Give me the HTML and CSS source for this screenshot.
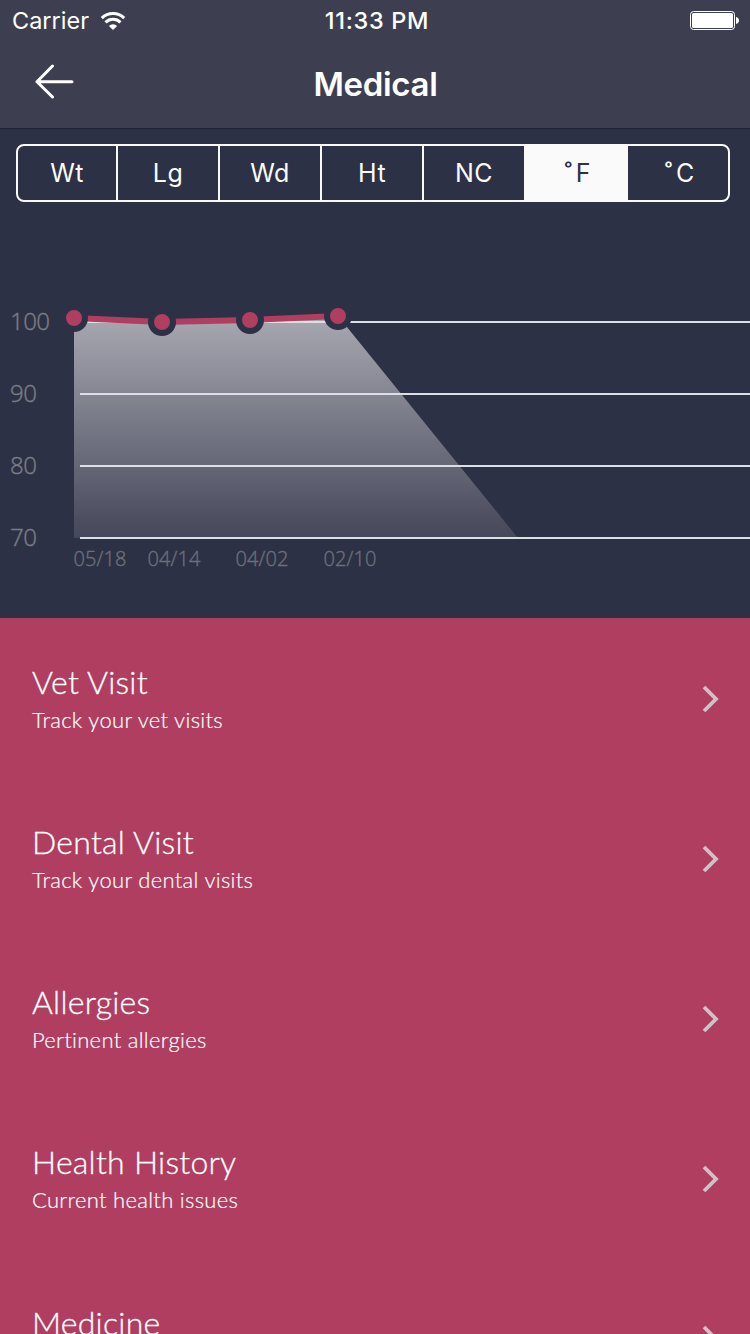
FILE: index.html
```
<!DOCTYPE html>
<html lang="en">
<head>
    <meta charset="UTF-8">
    <meta name="viewport" content="width=device-width, initial-scale=1.0">
    <title>Medical</title>
    <link rel="stylesheet" href="styles.css">
</head>
<body>
    <header class="header">
        <div class="status-bar">
            <div class="carrier">
                <span>Carrier</span>
                <svg width="26" height="20" viewBox="0 0 26 20" fill="none" stroke="white" stroke-width="3">
                    <path d="M1.8 7.1 A16 16 0 0 1 24.2 7.1"/>
                    <path d="M5.5 11.4 A10.8 10.8 0 0 1 20.5 11.4"/>
                    <path d="M13 19 L8.9 14.9 A5.8 5.8 0 0 1 17.1 14.9 Z" fill="white" stroke="none"/>
                </svg>
            </div>
            <span class="time">11:33 PM</span>
            <div class="battery">
                <svg width="50" height="20" viewBox="0 0 50 20">
                    <rect x="0.5" y="0.5" width="44" height="18" rx="3" fill="none" stroke="white"/>
                    <rect x="2" y="2" width="41" height="15" rx="1.5" fill="white"/>
                    <path d="M46 6 C50 6.5 50 12.5 46 13 Z" fill="white"/>
                </svg>
            </div>
        </div>
        <nav class="nav-bar">
            <a class="back">
                <svg width="40" height="36" viewBox="0 0 40 36" fill="none" stroke="white" stroke-width="3" stroke-linecap="round" stroke-linejoin="round">
                    <path d="M18.5 2 L3 17.7 L18.5 33 M3 17.7 H38"/>
                </svg>
            </a>
            <h1>Medical</h1>
        </nav>
    </header>

    <section class="stats">
        <div class="segments">
            <button>Wt</button>
            <button>Lg</button>
            <button>Wd</button>
            <button>Ht</button>
            <button>NC</button>
            <button class="active"><span class="degree">˚</span>F</button>
            <button><span class="degree">˚</span>C</button>
        </div>
        <svg class="chart" width="750" height="318" viewBox="0 300 750 318">
            <defs>
                <linearGradient id="areaFill" x1="0" y1="0" x2="0" y2="1">
                    <stop offset="0" stop-color="#a7a8b0"/>
                    <stop offset="1" stop-color="#45475a"/>
                </linearGradient>
            </defs>
            <path d="M74 318 L162 322 L250 320 L338 316 L518 538 H74 Z" fill="url(#areaFill)"/>
            <g class="grid">
                <path d="M80 322 H750"/>
                <path d="M80 394 H750"/>
                <path d="M80 466 H750"/>
                <path d="M80 538 H750"/>
            </g>
            <path class="line" d="M74 318 L162 322 L250 320 L338 316"/>
            <g class="dots">
                <circle cx="74" cy="318" r="11"/>
                <circle cx="162" cy="322" r="11"/>
                <circle cx="250" cy="320" r="11"/>
                <circle cx="338" cy="316" r="11"/>
            </g>
            <g class="y-labels">
                <text x="10" y="330" textLength="40">100</text>
                <text x="10" y="402" textLength="27">90</text>
                <text x="10" y="474" textLength="27">80</text>
                <text x="10" y="546" textLength="27">70</text>
            </g>
            <g class="x-labels">
                <text x="73.5" y="566" textLength="53">05/18</text>
                <text x="147.5" y="566" textLength="53">04/14</text>
                <text x="235.5" y="566" textLength="53">04/02</text>
                <text x="323.5" y="566" textLength="53">02/10</text>
            </g>
        </svg>
    </section>

    <main class="list">
        <div class="row">
            <div>
                <h2>Vet Visit</h2>
                <p>Track your vet visits</p>
            </div>
            <svg class="chevron" viewBox="0 0 18 28"><path d="M2 2 L14 14 L2 26"/></svg>
        </div>
        <div class="row">
            <div>
                <h2>Dental Visit</h2>
                <p>Track your dental visits</p>
            </div>
            <svg class="chevron" viewBox="0 0 18 28"><path d="M2 2 L14 14 L2 26"/></svg>
        </div>
        <div class="row">
            <div>
                <h2>Allergies</h2>
                <p>Pertinent allergies</p>
            </div>
            <svg class="chevron" viewBox="0 0 18 28"><path d="M2 2 L14 14 L2 26"/></svg>
        </div>
        <div class="row">
            <div>
                <h2>Health History</h2>
                <p>Current health issues</p>
            </div>
            <svg class="chevron" viewBox="0 0 18 28"><path d="M2 2 L14 14 L2 26"/></svg>
        </div>
        <div class="row last">
            <h2>Medicine</h2>
            <svg class="chevron" viewBox="0 0 18 28"><path d="M2 2 L14 14 L2 26"/></svg>
        </div>
    </main>
</body>
</html>
```
FILE: styles.css
```
* {
    box-sizing: border-box;
}
body {
    margin: 0;
    width: 750px;
    height: 1334px;
    overflow: hidden;
    font-family: Inter, sans-serif;
    background: #af3e61;
    color: white;
}
h1, h2, p {
    margin: 0;
}
.header {
    height: 129px;
    background: #3d3f50;
    border-bottom: 1px solid #202338;
}
.status-bar {
    display: grid;
    grid-template-columns: 1fr auto 1fr;
    align-items: center;
    height: 40px;
    padding: 1px 10px 0 12px;
}
.carrier {
    display: flex;
    align-items: center;
    gap: 11px;
    font-size: 23.5px;
}
.time {
    padding-left: 2px;
    font-weight: 550;
    font-size: 23.5px;
    letter-spacing: 0.7px;
}
.battery {
    display: flex;
    justify-content: flex-end;
}
.nav-bar {
    display: grid;
    grid-template-columns: 100px 1fr 100px;
    align-items: center;
    height: 88px;
    text-align: center;
}
.back {
    padding: 0 0 4px 34px;
    text-align: left;
}
.back svg {
    display: block;
}
h1 {
    padding-left: 1px;
    font-size: 33px;
    font-weight: 600;
    letter-spacing: -0.3px;
}
.stats {
    height: 489px;
    padding-top: 15px;
    background: #2d3146;
}
.segments {
    display: grid;
    grid-template-columns: 98px repeat(6, 102px);
    width: 714px;
    height: 58px;
    margin-left: 16px;
    border: 2px solid #fafafa;
    border-radius: 8px;
    overflow: hidden;
}
.segments button {
    padding: 0;
    border: none;
    border-left: 2px solid #fafafa;
    background: none;
    color: #fafafa;
    font-family: inherit;
    font-size: 25px;
    font-weight: 370;
    letter-spacing: 0.4px;
}
.segments button:first-child {
    border-left: none;
}
.segments .active {
    background: #fafafa;
    color: #2d3146;
}
.segments .degree {
    margin-left: 3px;
    margin-right: 3px;
    font-weight: 500;
}
.chart {
    display: block;
    margin-top: 98px;
}
.grid {
    stroke: #dddfe6;
    stroke-width: 2;
}
.line {
    fill: none;
    stroke: #af3e61;
    stroke-width: 6;
}
.dots {
    fill: #af3e61;
    stroke: #2d3146;
    stroke-width: 6;
}
.y-labels, .x-labels {
    font-family: "Open Sans", sans-serif;
    font-weight: 300;
    stroke-width: 0.4;
}
.y-labels {
    fill: #7b7c82;
    stroke: #7b7c82;
    font-size: 24px;
}
.x-labels {
    fill: #6c6e78;
    stroke: #6c6e78;
    font-size: 20px;
}
.row {
    display: flex;
    justify-content: space-between;
    align-items: center;
    height: 160px;
    padding: 2px 30px 0 32px;
    font-family: Lato, sans-serif;
}
.row h2 {
    padding-top: 1px;
    font-size: 32px;
    font-weight: 300;
    line-height: 40px;
    letter-spacing: 0.25px;
    -webkit-text-stroke: 0.3px white;
}
.row p {
    font-size: 22px;
    line-height: 35px;
    font-weight: 300;
    letter-spacing: 0.3px;
    -webkit-text-stroke: 0.2px white;
}
/* only the top of this row is on screen */
.row.last {
    align-items: flex-start;
    height: 76px;
    padding-top: 44px;
    overflow: hidden;
}
.row.last .chevron {
    margin-top: 23px;
}
.chevron {
    flex-shrink: 0;
    width: 18px;
    height: 28px;
    fill: none;
    stroke: #cbc3c8;
    stroke-width: 3.8;
}
```
